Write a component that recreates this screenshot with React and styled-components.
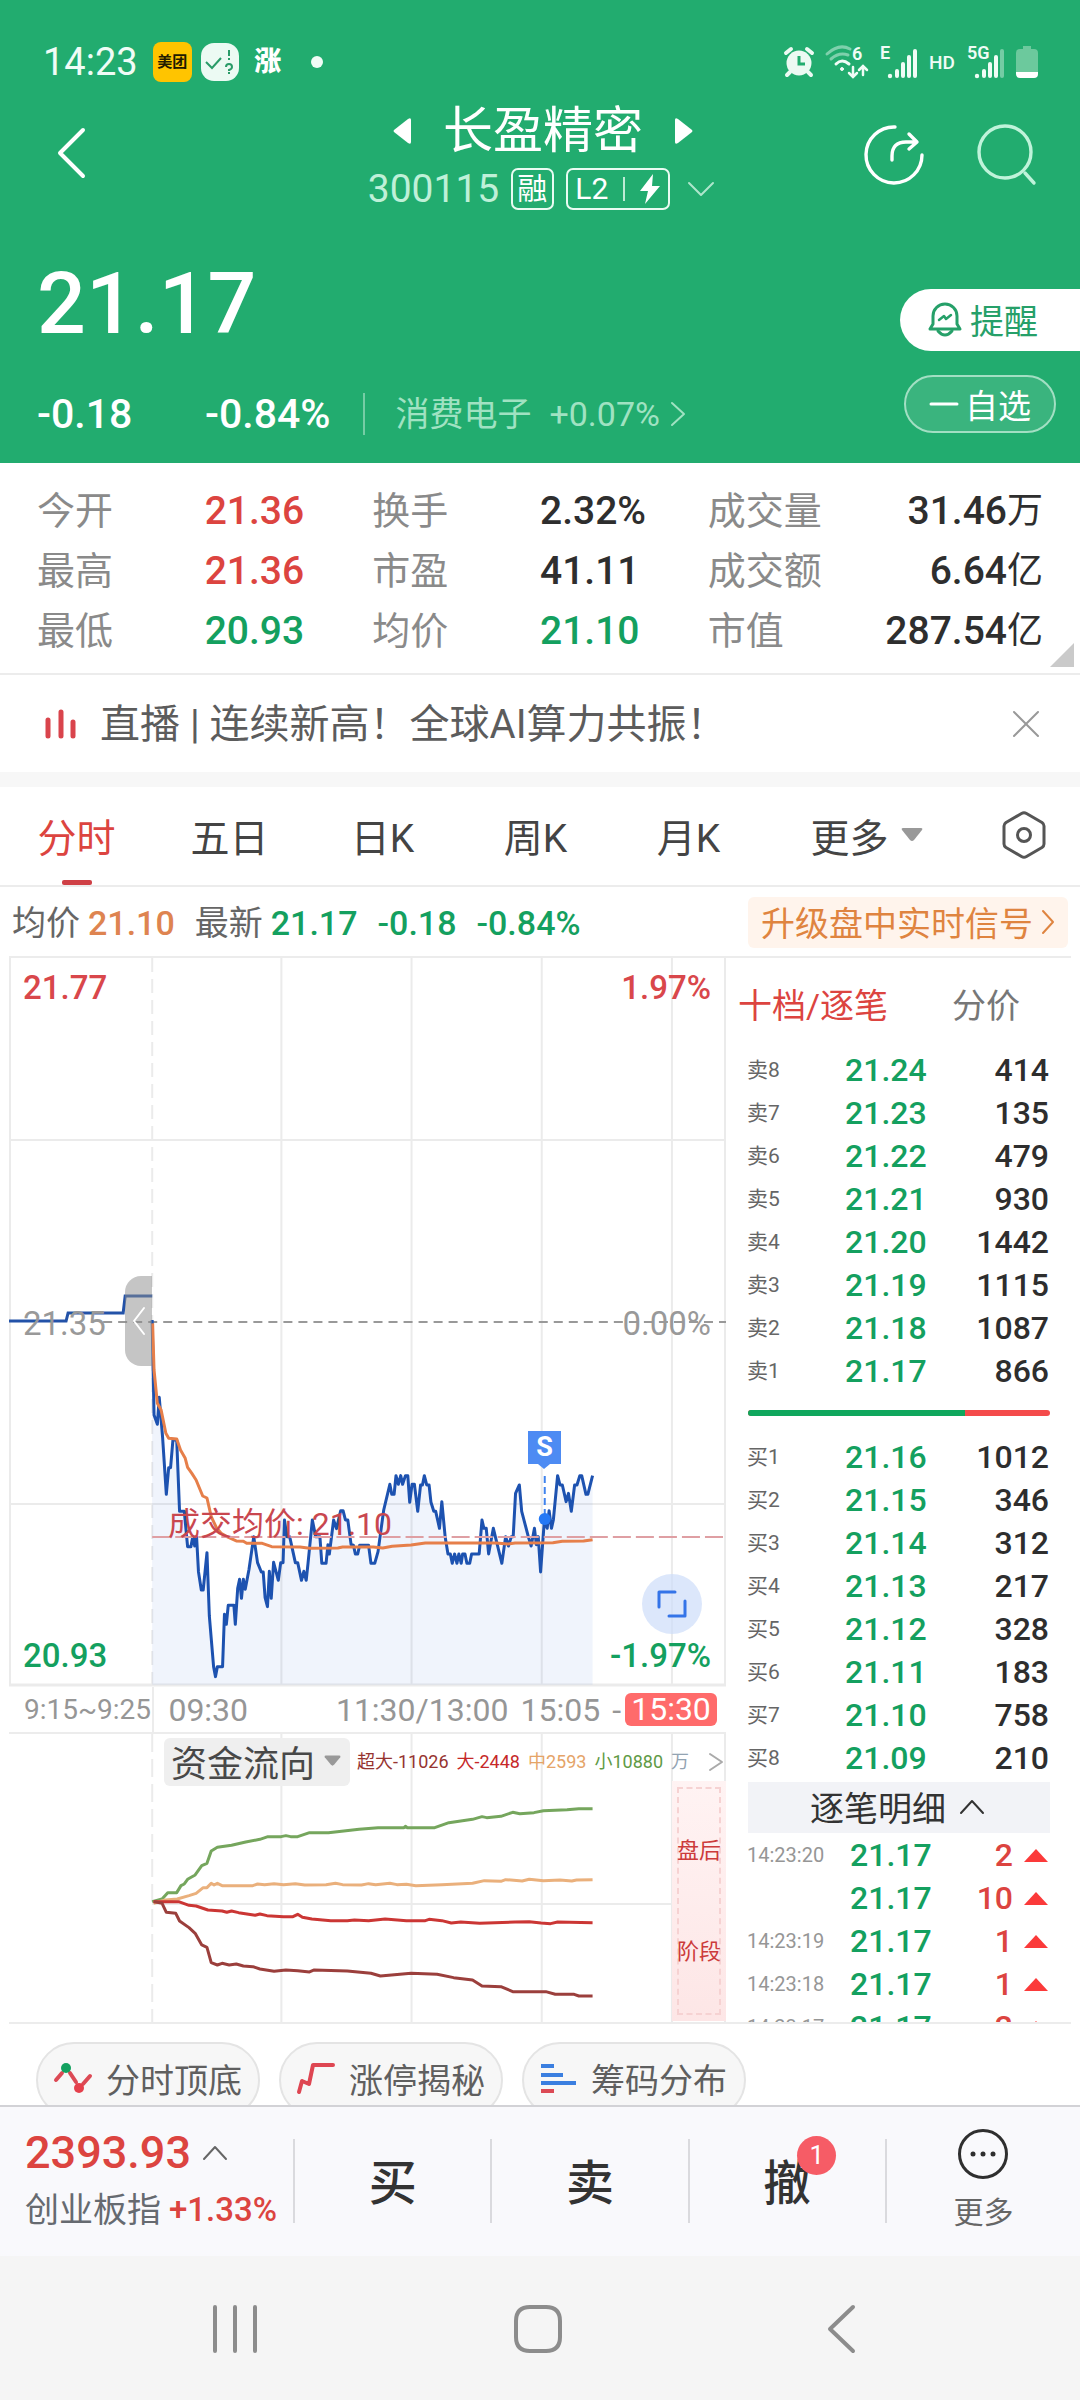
import React from "react";
import styled, { createGlobalStyle } from "styled-components";

const GREEN = "#22ac6f";
const DOWN = "#14a05f";
const UP = "#dc4440";

const Global = createGlobalStyle`
  *, *::before, *::after { box-sizing: border-box; }
  body {
    margin: 0;
    background: #fff;
    color: #333;
    font-family: Roboto, "Noto Sans CJK SC", sans-serif;
  }
  button {
    border: 0;
    padding: 0;
    background: none;
    font: inherit;
    color: inherit;
    display: inline-flex;
    align-items: center;
    justify-content: center;
  }
  a { color: inherit; text-decoration: none; }
  svg { display: block; flex: none; overflow: visible; }
  dl, dd, h1, p { margin: 0; font-weight: inherit; }
  table { border-collapse: collapse; table-layout: fixed; width: 100%; }
  td, th { padding: 0; font-weight: inherit; text-align: left; }
`;

/* ---------- header ---------- */
const Header = styled.header`
  background: ${GREEN};
  color: #fff;
`;
const StatusBar = styled.div`
  display: flex;
  align-items: center;
  justify-content: space-between;
  height: 88px;
  padding: 36px 42px 0 43px;
`;
const StatusGroup = styled.div`
  display: flex;
  align-items: center;
  gap: ${(p) => p.$gap}px;
`;
const Clock = styled.span`
  font-size: 38px;
  line-height: 44px;
  margin-right: 6px;
  color: #f0fcf6;
`;
const AppBadge = styled.span`
  width: 39px;
  height: 40px;
  border-radius: 8px;
  background: #ffc400;
  color: #221a00;
  font-size: 15px;
  font-weight: 700;
  line-height: 40px;
  text-align: center;
`;
const RiseBadge = styled.span`
  width: 40px;
  font-size: 27px;
  font-weight: 900;
  line-height: 40px;
  text-align: center;
`;
const Dot = styled.i`
  width: 12px;
  height: 12px;
  margin-left: 14px;
  border-radius: 50%;
  background: #f0fcf6;
`;
const TitleBar = styled.div`
  display: grid;
  grid-template-columns: 1fr auto 1fr;
  align-items: center;
  height: 132px;
  padding: 2px 42px 0 48px;
`;
const TitleCenter = styled.div`
  display: flex;
  flex-direction: column;
  align-items: center;
  gap: 7px;
`;
const NameRow = styled.div`
  display: flex;
  align-items: center;
  gap: 31px;
  height: 60px;
`;
const StockName = styled.h1`
  font-size: 50px;
  line-height: 60px;
  font-weight: 400;
`;
const CodeRow = styled.div`
  display: flex;
  align-items: center;
  gap: 12px;
  height: 42px;
`;
const Code = styled.span`
  font-size: 39px;
  line-height: 42px;
  color: #bff0d8;
`;
const Tag = styled.span`
  display: flex;
  align-items: center;
  justify-content: space-between;
  height: 42px;
  padding: 0 ${(p) => p.$pad}px;
  border: 2px solid #e9fbf2;
  border-radius: 7px;
  font-size: 30px;
  line-height: 38px;
  width: ${(p) => p.$width}px;
`;
const TagRule = styled.i`
  width: 2px;
  height: 24px;
  background: #bdebd5;
`;
const HeaderActions = styled.div`
  display: flex;
  justify-content: flex-end;
  gap: 54px;
`;
const Quote = styled.section`
  display: flex;
  justify-content: space-between;
  height: 243px;
`;
const QuoteLeft = styled.div`
  padding: 34px 0 0 37px;
`;
const Price = styled.p`
  font-size: 86px;
  line-height: 100px;
  font-weight: 500;
`;
const ChangeRow = styled.div`
  display: flex;
  align-items: center;
  height: 42px;
  margin-top: 39px;
`;
const Change = styled.span`
  font-size: 41px;
  line-height: 42px;
  font-weight: 500;
  min-width: ${(p) => p.$min || 0}px;
`;
const Sector = styled.a`
  display: flex;
  align-items: center;
  gap: 18px;
  margin-left: 33px;
  padding-left: 30px;
  border-left: 2px solid #75cda5;
  color: #a0e2c2;
  font-size: 34px;
  line-height: 42px;
`;
const SectorChange = styled.span`
  display: flex;
  align-items: center;
  gap: 10px;
`;
const QuoteRight = styled.div`
  display: flex;
  flex-direction: column;
  align-items: flex-end;
  gap: 24px;
  padding-top: 69px;
`;
const RemindButton = styled.button`
  width: 180px;
  height: 62px;
  gap: 8px;
  padding: 0 14px 2px 0;
  border-radius: 31px 0 0 31px;
  background: #fff;
  color: #26a069;
  font-size: 34px;
`;
const WatchButton = styled.button`
  width: 152px;
  height: 58px;
  gap: 6px;
  margin-right: 24px;
  border: 2px solid #a2dfc3;
  border-radius: 29px;
  background: #3ab47e;
  font-size: 33px;
`;

/* ---------- statistics ---------- */
const Stats = styled.dl`
  position: relative;
  display: grid;
  grid-template-columns: repeat(6, minmax(0, 1fr));
  grid-auto-rows: 60px;
  align-items: center;
  padding: 18px 37px 12px;
  border-bottom: 2px solid #ececec;
`;
const StatLabel = styled.dt`
  font-size: 38px;
  line-height: 60px;
  color: #8a8a8a;
`;
const StatValue = styled.dd`
  font-size: 39px;
  line-height: 60px;
  font-weight: 500;
  white-space: nowrap;
  color: ${(p) => p.$color || "#2e2e2e"};
  display: flex;
  justify-content: ${(p) => (p.$end ? "flex-end" : "flex-start")};
`;
const Unit = styled.span`
  font-size: 36px;
  font-weight: 400;
`;
const Corner = styled.i`
  position: absolute;
  right: 6px;
  bottom: 6px;
  border-left: 24px solid transparent;
  border-bottom: 24px solid #cacaca;
`;

/* ---------- news ---------- */
const News = styled.section`
  display: flex;
  align-items: center;
  height: 112px;
  padding: 0 40px 0 45px;
  border-bottom: 15px solid #f7f7f7;
  gap: 24px;
`;
const NewsText = styled.a`
  flex: 1;
  font-size: 40px;
  line-height: 56px;
  color: #5c5c5c;
  padding-top: 2px;
`;

/* ---------- tabs ---------- */
const Tabs = styled.nav`
  display: grid;
  grid-template-columns: repeat(5, 153fr) 203fr 112fr;
  height: 100px;
  border-bottom: 2px solid #ececec;
`;
const Tab = styled.button`
  position: relative;
  gap: 12px;
  padding-bottom: 2px;
  font-size: 39px;
  color: ${(p) => (p.$active ? UP : "#444")};
  &::after {
    content: "";
    display: ${(p) => (p.$active ? "block" : "none")};
    position: absolute;
    bottom: 0;
    width: 30px;
    height: 5px;
    border-radius: 2px;
    background: #cf4046;
  }
`;
const InfoRow = styled.div`
  display: flex;
  align-items: center;
  justify-content: space-between;
  height: 69px;
  padding: 2px 12px 0;
`;
const InfoList = styled.div`
  display: flex;
  align-items: center;
  gap: 20px;
  font-size: 34px;
  line-height: 50px;
  color: #666;
`;
const Num = styled.span`
  font-weight: ${(p) => p.$weight || 500};
  color: ${(p) => p.$color};
`;
const InfoPair = styled.span`
  display: flex;
  gap: 8px;
`;
const Signal = styled.button`
  width: 320px;
  height: 51px;
  gap: 8px;
  padding-bottom: 2px;
  border-radius: 6px;
  background: #fff4ec;
  color: #df8440;
  font-size: 34px;
`;

/* ---------- body ---------- */
const Board = styled.main`
  display: grid;
  grid-template-columns: minmax(0, 717fr) minmax(0, 345fr);
  height: 1068px;
  margin: 0 9px;
  border-top: 2px solid #ececec;
  border-bottom: 2px solid #ececec;
  overflow: hidden;
`;
const ChartColumn = styled.div`
  display: flex;
  flex-direction: column;
`;
const PriceChart = styled.section`
  position: relative;
  height: 729px;
`;
const ChartSvg = styled.svg`
  width: 100%;
  height: 100%;
`;
const Scale = styled.span`
  position: absolute;
  ${(p) => (p.$end ? "right: 15px" : "left: 14px")};
  top: ${(p) => p.$top}px;
  font-size: 33px;
  line-height: 40px;
  font-weight: ${(p) => p.$weight || 500};
  color: ${(p) => p.$color};
`;
const AvgNote = styled.span`
  position: absolute;
  left: 159px;
  top: 542px;
  font-size: 32px;
  line-height: 48px;
  color: #c9474f;
`;
const Handle = styled.button`
  position: absolute;
  right: 80%;
  top: 318px;
  width: 27px;
  height: 90px;
  border-radius: 16px 0 0 16px;
  background: rgba(140, 140, 140, 0.5);
`;
const Marker = styled.span`
  position: absolute;
  left: 519px;
  top: 473px;
  width: 33px;
  height: 33px;
  background: #4d8bf3;
  color: #fff;
  font-size: 27px;
  font-weight: 700;
  line-height: 33px;
  text-align: center;
  &::after {
    content: "";
    position: absolute;
    left: 10px;
    top: 33px;
    border: 6px solid transparent;
    border-top: 5px solid #4d8bf3;
    border-bottom: 0;
  }
`;
const Expand = styled.button`
  position: absolute;
  right: 24px;
  top: 616px;
  width: 60px;
  height: 60px;
  border-radius: 50%;
  background: rgba(205, 221, 250, 0.7);
`;
const TimeAxis = styled.div`
  display: flex;
  align-items: center;
  height: 47px;
  border-bottom: 2px solid #ececec;
  font-size: 32px;
  line-height: 40px;
  color: #969696;
`;
const PreOpen = styled.span`
  flex: 0 0 20%;
  padding-left: 15px;
  font-size: 28px;
`;
const Session = styled.div`
  flex: 1;
  display: flex;
  align-items: center;
  height: 45px;
  gap: 12px;
  padding: 0 9px 0 14px;
  border-left: 2px solid #ececec;
`;
const Noon = styled.span`
  margin-left: auto;
`;
const CloseTime = styled.span`
  display: flex;
  align-items: center;
  gap: 4px;
`;
const CloseBadge = styled.span`
  width: 92px;
  height: 33px;
  border-radius: 6px;
  background: #ff6b6b;
  color: #fff;
  line-height: 33px;
  text-align: center;
`;
const FlowChart = styled.section`
  position: relative;
  height: 288px;
`;
const FlowHead = styled.div`
  position: absolute;
  left: 155px;
  right: 2px;
  top: 4px;
  display: flex;
  align-items: center;
  justify-content: space-between;
`;
const FlowButton = styled.button`
  width: 186px;
  height: 48px;
  gap: 9px;
  padding: 0 2px 3px 0;
  border-radius: 6px;
  background: #efefef;
  color: #484848;
  font-size: 36px;
`;
const Legend = styled.div`
  display: flex;
  align-items: center;
  gap: 8px;
  margin-right: 12px;
  font-size: 18px;
  line-height: 28px;
`;
const AfterHours = styled.div`
  position: absolute;
  right: 0;
  top: 47px;
  bottom: 1px;
  width: 54px;
  padding: 6px 5px;
  background: linear-gradient(#fff3f3, #fde6e6);
`;
const AfterInner = styled.div`
  display: flex;
  flex-direction: column;
  align-items: center;
  gap: 69px;
  height: 100%;
  padding-top: 46px;
  border: 2px dashed #f6d2d2;
  color: #cc3b3b;
  font-size: 22px;
  line-height: 32px;
  white-space: nowrap;
`;

/* ---------- order book ---------- */
const Side = styled.aside`
  display: flex;
  flex-direction: column;
  min-width: 0;
  overflow: hidden;
  padding-right: 21px;
`;
const SideTabs = styled.div`
  display: flex;
  flex: none;
  align-items: center;
  gap: 64px;
  height: 91px;
  padding: 0 0 1px 12px;
`;
const SideTab = styled.button`
  font-size: 34px;
  white-space: nowrap;
  color: ${(p) => (p.$active ? UP : "#777")};
`;
const Book = styled.table`
  margin-left: 21px;
  width: calc(100% - 21px);
  flex: none;
`;
const BookRow = styled.tr`
  height: 43px;
`;
const Level = styled.th`
  width: 98px;
  font-size: 21px;
  line-height: 43px;
  color: #666;
`;
const BookPrice = styled.td`
  font-size: 32px;
  line-height: 43px;
  font-weight: 500;
  color: ${DOWN};
`;
const Volume = styled.td`
  width: 100px;
  padding-right: 1px;
  font-size: 32px;
  line-height: 43px;
  font-weight: 500;
  text-align: right;
  color: ${(p) => p.$color || "#2e2e2e"};
`;
const Ratio = styled.div`
  display: flex;
  flex: none;
  height: 6px;
  margin: 17px 0 20px 22px;
  border-radius: 3px;
  overflow: hidden;
  background: #f44b4b;
`;
const RatioSell = styled.i`
  background: #0fa75d;
`;
const DetailButton = styled.button`
  flex: none;
  height: 51px;
  margin: 2px 0 1px 22px;
  gap: 14px;
  padding: 0 4px 2px 0;
  background: #f2f3f7;
  color: #333;
  font-size: 34px;
`;
const TradeTime = styled.th`
  width: 103px;
  font-size: 20px;
  line-height: 43px;
  color: #969696;
`;
const Arrow = styled.td`
  width: 36px;
  padding-right: 2px;
`;
const ArrowUp = styled.i`
  display: block;
  margin-left: auto;
  width: 24px;
  border: 12px solid transparent;
  border-top: 0;
  border-bottom: 13px solid #fb3a3a;
`;

/* ---------- footer ---------- */
const Pills = styled.div`
  display: flex;
  gap: 19px;
  height: 81px;
  padding: 18px 36px 0;
  overflow: hidden;
`;
const Pill = styled.button`
  flex: none;
  width: 224px;
  height: 76px;
  gap: 14px;
  padding-bottom: 4px;
  border: 2px solid #e4e4e4;
  border-radius: 38px;
  background: #f7f7f7;
  color: #5f5f5f;
  font-size: 34px;
`;
const ActionBar = styled.footer`
  display: grid;
  grid-template-columns: 293fr repeat(3, 197fr) 195fr;
  align-items: center;
  height: 151px;
  padding-bottom: 2px;
  border-top: 2px solid #d2d2d6;
  background: #f9f9fc;
`;
const IndexBlock = styled.a`
  display: flex;
  flex-direction: column;
  gap: 10px;
  padding: 0 0 2px 25px;
  white-space: nowrap;
`;
const IndexValue = styled.span`
  display: flex;
  align-items: center;
  gap: 11px;
  font-size: 45px;
  line-height: 50px;
  font-weight: 500;
  color: ${UP};
`;
const IndexName = styled.span`
  display: flex;
  align-items: center;
  gap: 8px;
  font-size: 34px;
  line-height: 44px;
  color: #666a70;
`;
const IndexChange = styled.span`
  font-size: 33px;
  font-weight: 500;
  color: ${UP};
`;
const Action = styled.button`
  height: 84px;
  padding-bottom: 4px;
  border-left: 2px solid #dadade;
  font-size: 48px;
  font-weight: 500;
`;
const ActionText = styled.span`
  position: relative;
`;
const Badge = styled.i`
  position: absolute;
  left: 34px;
  top: -8px;
  width: 39px;
  height: 39px;
  border-radius: 50%;
  background: #f65c66;
  color: #fff;
  font-size: 26px;
  font-style: normal;
  font-weight: 400;
  line-height: 39px;
  text-align: center;
`;
const MoreAction = styled.button`
  height: 84px;
  border-left: 2px solid #dadade;
  flex-direction: column;
  gap: 14px;
  font-size: 30px;
  line-height: 40px;
  color: #666;
`;
const SystemNav = styled.nav`
  display: grid;
  grid-template-columns: repeat(3, 1fr);
  height: 144px;
  padding: 2px 88px 0 84px;
  background: #f5f5f5;
`;

/* ---------- drawings ---------- */
const Chevron = ({ w, h, d, color = "currentColor", sw = 2 }) => (
  <svg width={w} height={h} viewBox={`0 0 ${w} ${h}`} fill="none" stroke={color} strokeWidth={sw} strokeLinecap="round" strokeLinejoin="round">
    <path d={d} />
  </svg>
);

const Triangle = ({ flip }) => (
  <svg width="20" height="28" viewBox="0 0 20 28" fill="#fff">
    <path d={flip ? "M1 3Q1 0 4 2L18 13Q19 14 18 15L4 26Q1 28 1 25Z" : "M19 3Q19 0 16 2L2 13Q1 14 2 15L16 26Q19 28 19 25Z"} />
  </svg>
);

const DownTriangle = ({ w, h }) => (
  <svg width={w} height={h} viewBox="0 0 22 14" fill="#999">
    <path d="M2 0h18q2 0 1 2l-8 10q-2 2-4 0L1 2Q0 0 2 0Z" />
  </svg>
);

const DoneIcon = () => (
  <svg width="38" height="38" viewBox="0 0 38 38">
    <rect width="38" height="38" rx="13" fill="#ecfaf3" />
    <g fill="none" stroke="#2a9b68" strokeWidth="2">
      <path d="M5 19l6 6 9-10" />
      <path d="M28 7v6M28 15v2M25 24q0-3 3-3t3 3q0 2-3 3v1M28 29v2" />
    </g>
  </svg>
);

const AlarmIcon = () => (
  <svg width="30" height="30" viewBox="0 0 30 30" fill="none" stroke="#ecfaf3">
    <circle cx="15" cy="16" r="12.5" fill="#ecfaf3" stroke="none" />
    <path d="M2 6l5-4M28 6l-5-4M6 25l-3 3M24 25l3 3" strokeWidth="4" strokeLinecap="round" />
    <path d="M15 9v8h6" stroke={GREEN} strokeWidth="3" />
  </svg>
);

const WifiIcon = () => (
  <svg width="44" height="34" viewBox="0 0 44 34" fill="none" stroke="#f0fcf6" strokeWidth="3" strokeLinecap="round">
    <path d="M2 9Q14-2 25 4M6 14q8-7 17-4" opacity=".45" />
    <path d="M11 19q6-6 13 0" />
    <circle cx="17" cy="24" r="1.5" fill="#f0fcf6" strokeWidth="1" />
    <path d="M28 22v9M24 28l4 4 4-4M38 30v-9M34 25l4-4 4 4" strokeWidth="2.5" />
    <text x="27" y="15" fill="#f0fcf6" stroke="none" fontSize="18" fontWeight="600" fontFamily="Roboto">6</text>
  </svg>
);

const SignalIcon = ({ label, weak }) => (
  <svg width="38" height="34" viewBox="0 0 38 34" fill="#f0fcf6">
    <circle cx="10" cy="31" r="2.2" />
    <rect x="15" y="24" width="4" height="9" rx="2" />
    <rect x="21" y="17" width="4" height="16" rx="2" />
    <rect x="27" y="10" width="4" height="23" rx="2" />
    <rect x="33" y="4" width="4" height="29" rx="2" opacity={weak ? 0.4 : 1} />
    <text x="0" y="14" fontSize="18" fontWeight="600" fontFamily="Roboto">{label}</text>
  </svg>
);

const BatteryIcon = () => (
  <svg width="22" height="34" viewBox="0 0 22 34">
    <path d="M7 1h8v3h3q4 0 4 4v20H0V8q0-4 4-4h3Z" fill="#6cc99d" />
    <path d="M0 27h22v2q0 4-4 4H4q-4 0-4-4Z" fill="#fff" />
  </svg>
);

const ShareIcon = () => (
  <svg width="60" height="60" viewBox="0 0 60 60" fill="none" stroke="#fff" strokeWidth="3.4" strokeLinecap="round" strokeLinejoin="round">
    <path d="M31 2a28 28 0 1 0 27 28" />
    <path d="M28 35v-4q0-14 14-14h10M45 9l8 8-8 7" />
  </svg>
);

const SearchIcon = () => (
  <svg width="60" height="60" viewBox="0 0 60 60" fill="none" stroke="#bff3da" strokeWidth="3.4" strokeLinecap="round">
    <circle cx="27" cy="27" r="26" />
    <path d="M47 48l9 10" />
  </svg>
);

const BoltIcon = () => (
  <svg width="22" height="30" viewBox="0 0 22 30" fill="#fff">
    <path d="M14 0L1 17h8L6 30 21 12h-8Z" />
  </svg>
);

const BellIcon = () => (
  <svg width="34" height="36" viewBox="0 0 34 36" fill="none" stroke="#26a069" strokeWidth="3" strokeLinejoin="round" strokeLinecap="round">
    <path d="M2 28l3-5V15a12 12 0 0 1 24 0v8l3 5Z" />
    <path d="M10 30q7 8 14 0" />
    <path d="M11 19l5-4 2 3 5-4" strokeWidth="2.5" />
  </svg>
);

const LiveIcon = () => (
  <svg width="31" height="30" viewBox="0 0 31 30" stroke="#d9444c" strokeWidth="5" strokeLinecap="round">
    <path d="M3 11v16M16 3v24M28 13v14" />
  </svg>
);

const HexIcon = () => (
  <svg width="44" height="48" viewBox="0 0 44 48" fill="none" stroke="#555" strokeWidth="3" strokeLinejoin="round">
    <path d="M19.500 2.500Q22 1 24.500 2.500L40 11.500Q42 13 42 15V33Q42 35 40 36.500L24.500 45.500Q22 47 19.500 45.500L4 36.500Q2 35 2 33V15Q2 13 4 11.500Z" />
    <circle cx="22" cy="24" r="6.500" />
  </svg>
);

const PeakIcon = () => (
  <svg width="38" height="32" viewBox="0 0 38 32" fill="none" stroke="#dc4a55" strokeWidth="4" strokeLinecap="round">
    <path d="M2 18l6-7M16 11l6 9M29 22l7-8" />
    <circle cx="12" cy="6" r="5" fill="#12a15f" stroke="none" />
    <circle cx="25" cy="26" r="5" fill="#e5404c" stroke="none" />
  </svg>
);

const LimitIcon = () => (
  <svg width="38" height="32" viewBox="0 0 38 32" fill="none" stroke="#de4652" strokeWidth="4" strokeLinecap="round" strokeLinejoin="round">
    <path d="M2 30l3-11 7 3 4-19h20" />
  </svg>
);

const ChipIcon = () => (
  <svg width="36" height="32" viewBox="0 0 36 32" strokeWidth="4" stroke="#3b7fe0">
    <path d="M0 4h13M0 13h22M0 21h35" />
    <path d="M0 29h13" stroke="#dc4a55" />
  </svg>
);

const MoreIcon = () => (
  <svg width="50" height="50" viewBox="0 0 50 50" fill="#2f2f2f">
    <circle cx="25" cy="25" r="23.500" fill="none" stroke="#2f2f2f" strokeWidth="3" />
    <circle cx="15" cy="25" r="2.500" />
    <circle cx="25" cy="25" r="2.500" />
    <circle cx="35" cy="25" r="2.500" />
  </svg>
);

/* Minute series, in plot units: the plot is 1538 wide and three units tall per pixel. */
const PRICE =
  "322,-150 326,135 333,163 337,82 344,200 352,373 357,293 361,293 366,210 374,210 380,424 390,424 397,530 404,530 408,500 412,528 416,500 420,605 426,660 430,660 438,548 443,738 452,890 456,920 460,890 471,890 475,733 479,763 483,706 495,706 498,763 503,655 507,628 511,685 515,628 519,658 527,598 537,500 545,578 553,606 557,606 561,683 566,710 570,604 574,685 579,577 589,631 594,578 599,578 602,450 607,500 613,500 625,578 630,578 638,631 643,604 648,631 652,578 661,450 668,500 677,500 681,580 690,580 694,524 697,552 706,450 712,476 721,422 726,422 731,450 736,450 743,524 748,526 752,552 757,552 761,526 780,526 785,580 793,580 800,545 812,420 825,343 829,373 834,373 838,317 843,343 848,317 852,343 858,317 863,317 867,397 872,343 877,343 884,424 890,345 894,345 898,317 903,345 908,345 912,397 918,424 922,424 930,475 935,395 942,500 948,552 953,552 957,580 962,552 967,580 971,552 976,580 979,552 984,552 988,580 994,580 998,552 1014,552 1020,450 1024,475 1029,475 1034,552 1044,475 1062,580 1070,500 1076,528 1082,500 1086,500 1091,370 1099,345 1104,424 1118,500 1124,528 1131,475 1135,524 1139,500 1144,606 1152,450 1158,475 1162,422 1167,475 1171,450 1180,317 1185,345 1190,345 1198,395 1203,370 1209,424 1216,345 1221,345 1227,317 1231,317 1240,373 1244,373 1254,317";
const AVERAGE =
  "323,-140 326,0 333,100 341,120 351,190 357,205 374,207 382,240 392,265 397,292 406,310 415,330 429,378 438,384 447,440 458,473 468,490 480,500 500,513 515,514 522,520 555,520 575,530 635,531 655,535 715,534 725,531 790,531 810,534 830,529 870,525 900,519 1050,519 1075,522 1090,519 1170,518 1190,514 1235,513 1254,509";
const FLOWS = [
  { color: "#75a65d", points: "322,545 343,537 355,518 374,518 383,497 390,492 397,478 413,465 427,437 438,430 447,393 460,382 490,376 520,366 550,358 567,350 595,350 605,347 615,350 630,350 655,338 695,338 760,328 800,323 855,323 858,319 862,323 920,323 950,308 1000,298 1020,290 1030,293 1060,289 1085,277 1100,281 1130,278 1150,272 1200,269 1225,266 1254,266" },
  { color: "#eab07c", points: "325,550 350,540 375,537 400,527 415,520 430,503 438,503 447,490 453,495 460,490 470,497 535,497 545,492 560,494 580,491 600,494 625,491 645,495 690,494 710,490 725,494 765,495 780,491 795,494 825,490 840,494 860,493 880,497 935,494 1000,490 1025,482 1060,484 1070,479 1105,483 1120,478 1150,482 1185,480 1210,483 1220,480 1254,479" },
  { color: "#cb3634", points: "325,545 378,545 400,556 415,558 440,570 470,573 480,577 490,573 505,578 540,586 550,582 565,587 600,590 620,590 630,583 640,592 660,597 700,602 735,602 750,600 780,602 815,597 860,602 900,602 908,598 935,602 955,609 975,606 1015,610 1090,606 1120,605 1145,609 1165,611 1180,606 1254,608" },
  { color: "#9b3f3c", points: "325,545 343,550 352,577 372,580 380,603 400,623 413,640 427,675 438,682 447,728 460,735 470,730 485,735 500,732 515,738 535,740 550,747 580,754 605,750 630,752 655,756 665,750 735,753 785,760 805,768 870,760 925,763 960,773 1000,780 1020,798 1060,800 1085,815 1155,815 1175,823 1215,823 1225,828 1254,828" },
];

const GRID_X = [272, 402, 532, 662];
const line = { fill: "none", vectorEffect: "non-scaling-stroke", strokeLinejoin: "round" };

const PricePlot = () => (
  <ChartSvg viewBox="0 0 716 729" preserveAspectRatio="none" aria-hidden="true">
    <g stroke="#ebebeb" strokeWidth="2">
      {GRID_X.map((x) => <path key={x} d={`M${x} 0V728`} />)}
      <path d="M0 182H716M0 546H716" />
      <path d="M1 0V728M715 0V728" />
      <path d="M0 727H716" strokeWidth="3" />
      <path d="M143 0V728" strokeDasharray="14 7" />
    </g>
    <path d="M94 364H716" stroke="#999" strokeWidth="2" strokeDasharray="9 6" />
    <g transform="translate(-9 412) scale(0.4719 0.3333)">
      <polygon points={`322,944 ${PRICE} 1254,944`} fill="#3c78dc" fillOpacity=".08" />
      <polyline {...line} points={PRICE} stroke="#1d52b0" strokeWidth="3" />
      <polyline {...line} points={AVERAGE} stroke="#e67f4a" strokeWidth="3" />
    </g>
    <path d="M143 579H716" stroke="#df9fa3" strokeWidth="2" strokeDasharray="18 5" />
    <path d="M0 363H57L59 355H114L116 338H143" fill="none" stroke="#2352a8" strokeWidth="3" />
    <path d="M535 518V556" stroke="#3f83ee" strokeWidth="2" strokeDasharray="7 4" />
    <circle cx="535" cy="561" r="6" fill="#2478f5" />
  </ChartSvg>
);

const FlowPlot = () => (
  <ChartSvg viewBox="0 0 716 288" preserveAspectRatio="none" aria-hidden="true">
    <g stroke="#ebebeb" strokeWidth="2">
      {GRID_X.map((x) => <path key={x} d={`M${x} 0V288`} />)}
      <path d="M143 170H662M715 0V288" />
      <path d="M143 0V288" strokeDasharray="18 7" />
    </g>
    <g transform="translate(-9 -14) scale(0.4719 0.3333)">
      {FLOWS.map((f) => <polyline key={f.color} {...line} points={f.points} stroke={f.color} strokeWidth="3" />)}
    </g>
  </ChartSvg>
);

/* ---------- data ---------- */
const STATS = [
  ["今开", "21.36", UP], ["换手", "2.32%"], ["成交量", "31.46", null, "万"],
  ["最高", "21.36", UP], ["市盈", "41.11"], ["成交额", "6.64", null, "亿"],
  ["最低", "20.93", DOWN], ["均价", "21.10", DOWN], ["市值", "287.54", null, "亿"],
];
const SELLS = [
  ["卖8", "21.24", "414"], ["卖7", "21.23", "135"], ["卖6", "21.22", "479"], ["卖5", "21.21", "930"],
  ["卖4", "21.20", "1442"], ["卖3", "21.19", "1115"], ["卖2", "21.18", "1087"], ["卖1", "21.17", "866"],
];
const BUYS = [
  ["买1", "21.16", "1012"], ["买2", "21.15", "346"], ["买3", "21.14", "312"], ["买4", "21.13", "217"],
  ["买5", "21.12", "328"], ["买6", "21.11", "183"], ["买7", "21.10", "758"], ["买8", "21.09", "210"],
];
const SELL_SHARE = 72;
const TRADES = [
  ["14:23:20", "21.17", "2"], ["", "21.17", "10"], ["14:23:19", "21.17", "1"],
  ["14:23:18", "21.17", "1"], ["14:23:17", "21.17", "2"],
];

const OrderTable = ({ rows }) => (
  <Book>
    <tbody>
      {rows.map(([level, price, volume]) => (
        <BookRow key={level}>
          <Level scope="row">{level}</Level>
          <BookPrice>{price}</BookPrice>
          <Volume>{volume}</Volume>
        </BookRow>
      ))}
    </tbody>
  </Book>
);

export default function App() {
  return (
    <>
      <Global />
      <Header>
        <StatusBar>
          <StatusGroup $gap={9}>
            <Clock>14:23</Clock>
            <AppBadge>美团</AppBadge>
            <DoneIcon />
            <RiseBadge>涨</RiseBadge>
            <Dot />
          </StatusGroup>
          <StatusGroup $gap={11}>
            <AlarmIcon />
            <WifiIcon />
            <SignalIcon label="E" />
            <svg width="27" height="34" viewBox="0 0 27 34" aria-hidden="true">
              <text x="0" y="24" fontSize="19" fontWeight="500" fontFamily="Roboto" fill="#f0fcf6">HD</text>
            </svg>
            <SignalIcon label="5G" weak />
            <BatteryIcon />
          </StatusGroup>
        </StatusBar>
        <TitleBar>
          <div>
            <button aria-label="返回">
              <Chevron w={46} h={54} d="M35 4L12 27L35 50" sw={4} />
            </button>
          </div>
          <TitleCenter>
            <NameRow>
              <button aria-label="上一只"><Triangle /></button>
              <StockName>长盈精密</StockName>
              <button aria-label="下一只"><Triangle flip /></button>
            </NameRow>
            <CodeRow>
              <Code>300115</Code>
              <Tag $width={43} $pad={4}>融</Tag>
              <Tag $width={104} $pad={7}>L2<TagRule /><BoltIcon /></Tag>
              <Chevron w={36} h={20} d="M7 4L19 16L31 4" color="#aee6cb" />
            </CodeRow>
          </TitleCenter>
          <HeaderActions>
            <button aria-label="分享"><ShareIcon /></button>
            <button aria-label="搜索"><SearchIcon /></button>
          </HeaderActions>
        </TitleBar>
        <Quote>
          <QuoteLeft>
            <Price>21.17</Price>
            <ChangeRow>
              <Change $min={168}>-0.18</Change>
              <Change>-0.84%</Change>
              <Sector href="#sector">
                消费电子
                <SectorChange>
                  +0.07%
                  <Chevron w={16} h={26} d="M2 2L14 13L2 24" />
                </SectorChange>
              </Sector>
            </ChangeRow>
          </QuoteLeft>
          <QuoteRight>
            <RemindButton><BellIcon />提醒</RemindButton>
            <WatchButton>
              <Chevron w={30} h={4} d="M2 2H28" sw={3} />
              自选
            </WatchButton>
          </QuoteRight>
        </Quote>
      </Header>

      <Stats>
        {STATS.map(([label, value, color, unit]) => (
          <React.Fragment key={label}>
            <StatLabel>{label}</StatLabel>
            <StatValue $color={color} $end={!!unit}>
              {value}
              {unit && <Unit>{unit}</Unit>}
            </StatValue>
          </React.Fragment>
        ))}
        <Corner />
      </Stats>

      <News>
        <LiveIcon />
        <NewsText href="#live">直播 | 连续新高！全球AI算力共振！</NewsText>
        <button aria-label="关闭">
          <Chevron w={28} h={28} d="M2 2L26 26M26 2L2 26" color="#999" />
        </button>
      </News>

      <Tabs>
        <Tab $active>分时</Tab>
        <Tab>五日</Tab>
        <Tab>日K</Tab>
        <Tab>周K</Tab>
        <Tab>月K</Tab>
        <Tab>更多<DownTriangle w={22} h={14} /></Tab>
        <Tab aria-label="设置"><HexIcon /></Tab>
      </Tabs>

      <InfoRow>
        <InfoList>
          <InfoPair>均价<Num $color="#de8450">21.10</Num></InfoPair>
          <InfoPair>最新<Num $color={DOWN}>21.17</Num></InfoPair>
          <Num $color={DOWN}>-0.18</Num>
          <Num $color={DOWN}>-0.84%</Num>
        </InfoList>
        <Signal>
          升级盘中实时信号
          <Chevron w={14} h={26} d="M2 2L12 13L2 24" />
        </Signal>
      </InfoRow>

      <Board>
        <ChartColumn>
          <PriceChart>
            <PricePlot />
            <Scale $top={10} $color="#d9474b">21.77</Scale>
            <Scale $top={10} $end $color="#d9474b">1.97%</Scale>
            <Scale $top={346} $color="#999" $weight={400}>21.35</Scale>
            <Scale $top={346} $end $color="#999" $weight={400}>0.00%</Scale>
            <Scale $top={678} $color={DOWN}>20.93</Scale>
            <Scale $top={678} $end $color={DOWN}>-1.97%</Scale>
            <AvgNote>成交均价: 21.10</AvgNote>
            <Marker>S</Marker>
            <Handle aria-label="收起竞价">
              <Chevron w={16} h={30} d="M13 2L3 15L13 28" color="#fff" />
            </Handle>
            <Expand aria-label="全屏">
              <Chevron w={30} h={30} d="M2 18V3H18M12 27H28V12" color="#3474e8" sw={3} />
            </Expand>
          </PriceChart>
          <TimeAxis>
            <PreOpen>9:15~9:25</PreOpen>
            <Session>
              <span>09:30</span>
              <Noon>11:30/13:00</Noon>
              <span>15:05</span>
              <CloseTime>-<CloseBadge>15:30</CloseBadge></CloseTime>
            </Session>
          </TimeAxis>
          <FlowChart>
            <FlowPlot />
            <FlowHead>
              <FlowButton>资金流向<DownTriangle w={17} h={12} /></FlowButton>
              <Legend>
                <Num $color="#963431" $weight={400}>超大-11026</Num>
                <Num $color="#c62828" $weight={400}>大-2448</Num>
                <Num $color="#e5a468" $weight={400}>中2593</Num>
                <Num $color="#5f9a45" $weight={400}>小10880</Num>
                <Num $color="#93a3b2" $weight={400}>万</Num>
              </Legend>
              <button aria-label="资金详情">
                <Chevron w={16} h={20} d="M2 2L14 10L2 18" color="#aaa" />
              </button>
            </FlowHead>
            <AfterHours>
              <AfterInner><span>盘后</span><span>阶段</span></AfterInner>
            </AfterHours>
          </FlowChart>
        </ChartColumn>

        <Side>
          <SideTabs>
            <SideTab $active>十档/逐笔</SideTab>
            <SideTab>分价</SideTab>
          </SideTabs>
          <OrderTable rows={SELLS} />
          <Ratio><RatioSell style={{ width: `${SELL_SHARE}%` }} /></Ratio>
          <OrderTable rows={BUYS} />
          <DetailButton>
            逐笔明细
            <Chevron w={24} h={14} d="M1 13L12 1L23 13" />
          </DetailButton>
          <Book>
            <tbody>
              {TRADES.map(([time, price, volume], i) => (
                <BookRow key={i}>
                  <TradeTime scope="row">{time}</TradeTime>
                  <BookPrice>{price}</BookPrice>
                  <Volume $color={UP}>{volume}</Volume>
                  <Arrow><ArrowUp /></Arrow>
                </BookRow>
              ))}
            </tbody>
          </Book>
        </Side>
      </Board>

      <Pills>
        <Pill><PeakIcon />分时顶底</Pill>
        <Pill><LimitIcon />涨停揭秘</Pill>
        <Pill><ChipIcon />筹码分布</Pill>
      </Pills>

      <ActionBar>
        <IndexBlock href="#index">
          <IndexValue>
            2393.93
            <Chevron w={26} h={16} d="M2 14L13 2L24 14" color="#666" />
          </IndexValue>
          <IndexName>创业板指<IndexChange>+1.33%</IndexChange></IndexName>
        </IndexBlock>
        <Action>买</Action>
        <Action>卖</Action>
        <Action><ActionText>撤<Badge>1</Badge></ActionText></Action>
        <MoreAction><MoreIcon />更多</MoreAction>
      </ActionBar>

      <SystemNav>
        <button aria-label="最近任务">
          <Chevron w={46} h={48} d="M3 2V46M23 2V46M43 2V46" color="#8c8c8c" sw={4} />
        </button>
        <button aria-label="主屏幕">
          <Chevron w={48} h={48} d="M16 2H32Q46 2 46 16V32Q46 46 32 46H16Q2 46 2 32V16Q2 2 16 2Z" color="#8c8c8c" sw={4} />
        </button>
        <button aria-label="系统返回">
          <Chevron w={30} h={48} d="M27 2L4 24L27 46" color="#8c8c8c" sw={4} />
        </button>
      </SystemNav>
    </>
  );
}
